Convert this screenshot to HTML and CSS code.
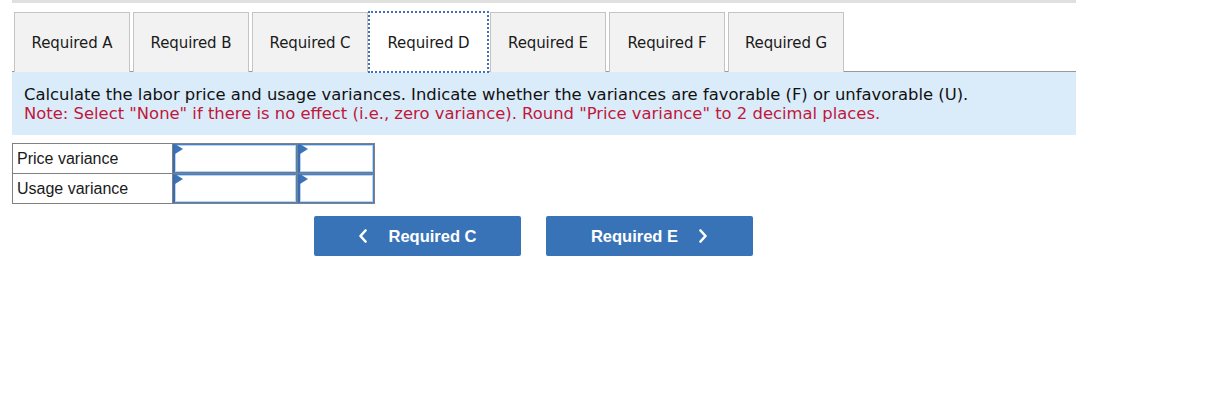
FILE: index.html
```html
<!DOCTYPE html>
<html>
<head>
<meta charset="utf-8">
<link rel="stylesheet" href="styles.css">
</head>
<body>
<div class="page">
  <div class="topbar"></div>
  <div class="tabs">
    <div class="tab">Required A</div>
    <div class="tab">Required B</div>
    <div class="tab">Required C</div>
    <div class="tab active">Required D</div>
    <div class="tab">Required E</div>
    <div class="tab">Required F</div>
    <div class="tab">Required G</div>
  </div>
  <div class="panel">
    <div class="instr">Calculate the labor price and usage variances. Indicate whether the variances are favorable (F) or unfavorable (U).</div>
    <div class="note">Note: Select "None" if there is no effect (i.e., zero variance). Round "Price variance" to 2 decimal places.</div>
  </div>
  <table class="grid">
    <tr>
      <td class="label">Price variance</td>
      <td class="cell wide"><div class="inp"><span class="flag"></span></div></td>
      <td class="cell narrow"><div class="inp"><span class="flag"></span></div></td>
    </tr>
    <tr>
      <td class="label">Usage variance</td>
      <td class="cell wide"><div class="inp"><span class="flag"></span></div></td>
      <td class="cell narrow"><div class="inp"><span class="flag"></span></div></td>
    </tr>
  </table>
  <div class="nav">
    <button class="btn"><svg class="chev" width="10" height="14" viewBox="0 0 10 14"><polyline points="7.5,1.5 2.5,7 7.5,12.5" fill="none" stroke="#fff" stroke-width="2.6" stroke-linecap="round" stroke-linejoin="round"/></svg><span class="btxt left">Required C</span></button>
    <button class="btn"><span class="btxt right">Required E</span><svg class="chev" width="10" height="14" viewBox="0 0 10 14"><polyline points="2.5,1.5 7.5,7 2.5,12.5" fill="none" stroke="#fff" stroke-width="2.6" stroke-linecap="round" stroke-linejoin="round"/></svg></button>
  </div>
</div>
</body>
</html>
```

FILE: styles.css
```css
html, body {
  margin: 0;
  padding: 0;
  background: #fff;
}
.page {
  width: 1064px;
  margin-left: 12px;
}
.topbar {
  height: 3px;
  background: #e0e0e0;
}
.tabs {
  display: flex;
  align-items: flex-end;
  gap: 3px;
  padding-left: 2px;
  margin-top: 7px;
  height: 61px;
  position: relative;
  z-index: 1;
}
.tab {
  box-sizing: border-box;
  width: 116px;
  height: 60px;
  margin-bottom: -1px;
  background: #f2f2f2;
  border: 1px solid #c4c4c4;
  border-bottom: none;
  font-family: "DejaVu Sans", Verdana, sans-serif;
  font-size: 15px;
  color: #1a1a1a;
  display: flex;
  align-items: center;
  justify-content: center;
  letter-spacing: -0.1px;
}
.tab.active {
  width: 121px;
  height: 62px;
  margin: 0 -2px -2px -3px;
  padding-top: 2px;
  background: #fff;
  border: 2px dotted #4070b5;
}
.panel {
  border-top: 1px solid #999;
  background: #daecfa;
  padding: 13px 12px 12px 12px;
  font-family: "DejaVu Sans", Verdana, sans-serif;
  font-size: 16.4px;
  line-height: 19px;
  color: #111;
}
.note {
  color: #c0173a;
}
.grid {
  border-collapse: collapse;
  margin-top: 8px;
  font-family: "Liberation Sans", Arial, sans-serif;
  font-size: 16px;
  color: #1a1a1a;
}
.grid td {
  border: 1px solid #808080;
  height: 29px;
  padding: 0;
}
.label {
  width: 155px;
  padding-left: 4px !important;
}
.cell.wide { width: 124px; }
.cell.narrow { width: 76px; }
.inp {
  box-sizing: border-box;
  height: 29px;
  margin: 0;
  border: 1px solid #4a80c4;
  border-left: 2px solid #3a6db0;
  box-shadow: inset 0 0 0 1px #bcd3f0;
  background: #fff;
  position: relative;
}
.flag {
  position: absolute;
  left: 0;
  top: 0;
  width: 0;
  height: 0;
  border-top: 5px solid transparent;
  border-bottom: 5px solid transparent;
  border-left: 8px solid #3b73ba;
  margin-top: -1px;
}
.nav {
  display: flex;
  gap: 25px;
  margin-top: 12px;
  padding-left: 302px;
}
.btn {
  width: 207px;
  height: 40px;
  border: none;
  border-radius: 2px;
  background: #3873b8;
  color: #fff;
  font-family: "Liberation Sans", Arial, sans-serif;
  font-weight: bold;
  font-size: 16.5px;
  display: flex;
  align-items: center;
  justify-content: center;
  padding: 0;
  cursor: pointer;
}
.btxt.left { margin-left: 20px; }
.btxt.right { margin-right: 20px; }
.chev { display: block; }
```
